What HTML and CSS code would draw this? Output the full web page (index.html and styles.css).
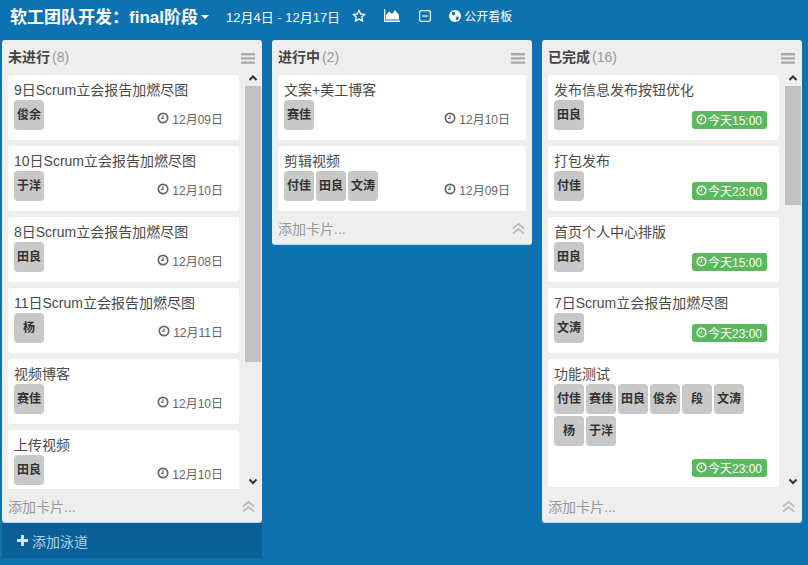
FILE: index.html
```html
<!DOCTYPE html>
<html lang="zh">
<head>
<meta charset="utf-8">
<title>软工团队开发</title>
<link rel="stylesheet" href="styles.css">
</head>
<body>
<svg class="defs" width="0" height="0" aria-hidden="true">
  <symbol id="clock" viewBox="0 0 12 12"><circle cx="6" cy="6" r="4.7" fill="none" stroke="currentColor" stroke-width="1.7"/><path d="M6 3.2V6.3H3.9" fill="none" stroke="currentColor" stroke-width="1.2"/></symbol>
  <symbol id="menu" viewBox="0 0 14 11"><path d="M0 0h14v2.4H0zM0 4.2h14v2.4H0zM0 8.4h14v2.4H0z" fill="currentColor"/></symbol>
  <symbol id="dbl" viewBox="0 0 14 13"><path d="M1 6.5 7 1.5l6 5M1 12l6-5 6 5" fill="none" stroke="currentColor" stroke-width="2"/></symbol>
  <symbol id="up" viewBox="0 0 16 16"><path d="M4.5 10 8 6.5l3.5 3.5" fill="none" stroke="currentColor" stroke-width="2"/></symbol>
  <symbol id="down" viewBox="0 0 16 16"><path d="M4.5 6.5 8 10l3.5-3.5" fill="none" stroke="currentColor" stroke-width="2"/></symbol>
</svg>
<header class="topbar">
  <h1 class="board-title">软工团队开发：final阶段</h1>
  <span class="caret"></span>
  <span class="range">12月4日 - 12月17日</span>
  <svg class="ico star" width="14" height="14" viewBox="0 0 14 14"><path d="M7 1.3 8.7 5l4 .4-3 2.700.9 4L7 10l-3.600 2.100.9-4-3-2.700 4-.4z" fill="none" stroke="currentColor" stroke-width="1.300" stroke-linejoin="round"/></svg>
  <svg class="ico chart" width="16" height="13" viewBox="0 0 16 13"><path d="M0 0h1.200v11.500H16V13H0z M2 10.500V6l3-3.500 3 2.500 3-4 4 5v4.500z" fill="currentColor"/></svg>
  <svg class="ico minus" width="12" height="12" viewBox="0 0 12 12"><rect x=".6" y=".6" width="10.800" height="10.800" rx="1.800" fill="none" stroke="currentColor" stroke-width="1.200"/><path d="M3 6h6" stroke="currentColor" stroke-width="1.200"/></svg>
  <svg class="ico globe" width="12" height="12" viewBox="0 0 12 12"><circle cx="6" cy="6" r="6" fill="currentColor"/><path d="M3 2.500 5.500 1.800 6.500 4 4.800 5.500 3 4.500zM7.500 6.500 10 6.800 9 9.800 7.500 10.500 6.800 8.500z" fill="#0e72b0"/></svg>
  <span class="visibility">公开看板</span>
</header>
<main class="board">
  <section class="column">
    <div class="col-head"><span class="col-name">未进行</span><span class="col-count">(8)</span><svg class="col-menu"><use href="#menu"/></svg></div>
    <div class="list">
      <div class="cards">
        <article class="card"><div class="card-title">9日Scrum立会报告加燃尽图</div><div class="card-meta"><div class="tags"><span class="tag">俊余</span></div><span class="due"><svg class="clock"><use href="#clock"/></svg>12月09日</span></div></article>
        <article class="card"><div class="card-title">10日Scrum立会报告加燃尽图</div><div class="card-meta"><div class="tags"><span class="tag">于洋</span></div><span class="due"><svg class="clock"><use href="#clock"/></svg>12月10日</span></div></article>
        <article class="card"><div class="card-title">8日Scrum立会报告加燃尽图</div><div class="card-meta"><div class="tags"><span class="tag">田良</span></div><span class="due"><svg class="clock"><use href="#clock"/></svg>12月08日</span></div></article>
        <article class="card"><div class="card-title">11日Scrum立会报告加燃尽图</div><div class="card-meta"><div class="tags"><span class="tag">杨</span></div><span class="due"><svg class="clock"><use href="#clock"/></svg>12月11日</span></div></article>
        <article class="card"><div class="card-title">视频博客</div><div class="card-meta"><div class="tags"><span class="tag">赛佳</span></div><span class="due"><svg class="clock"><use href="#clock"/></svg>12月10日</span></div></article>
        <article class="card"><div class="card-title">上传视频</div><div class="card-meta"><div class="tags"><span class="tag">田良</span></div><span class="due"><svg class="clock"><use href="#clock"/></svg>12月10日</span></div></article>
      </div>
      <div class="scrollbar"><svg class="sb-arrow"><use href="#up"/></svg><div class="sb-track"><div class="sb-thumb" style="height:276px"></div></div><svg class="sb-arrow"><use href="#down"/></svg></div>
    </div>
    <div class="col-foot"><span>添加卡片...</span><svg class="foot-ico"><use href="#dbl"/></svg></div>
  </section>

  <section class="column">
    <div class="col-head"><span class="col-name">进行中</span><span class="col-count">(2)</span><svg class="col-menu"><use href="#menu"/></svg></div>
    <div class="list">
      <div class="cards">
        <article class="card"><div class="card-title">文案+美工博客</div><div class="card-meta"><div class="tags"><span class="tag">赛佳</span></div><span class="due"><svg class="clock"><use href="#clock"/></svg>12月10日</span></div></article>
        <article class="card"><div class="card-title">剪辑视频</div><div class="card-meta"><div class="tags"><span class="tag">付佳</span><span class="tag">田良</span><span class="tag">文涛</span></div><span class="due"><svg class="clock"><use href="#clock"/></svg>12月09日</span></div></article>
      </div>
    </div>
    <div class="col-foot"><span>添加卡片...</span><svg class="foot-ico"><use href="#dbl"/></svg></div>
  </section>

  <section class="column">
    <div class="col-head"><span class="col-name">已完成</span><span class="col-count">(16)</span><svg class="col-menu"><use href="#menu"/></svg></div>
    <div class="list">
      <div class="cards">
        <article class="card"><div class="card-title">发布信息发布按钮优化</div><div class="card-meta"><div class="tags"><span class="tag">田良</span></div><span class="due soon"><svg class="clock"><use href="#clock"/></svg>今天15:00</span></div></article>
        <article class="card"><div class="card-title">打包发布</div><div class="card-meta"><div class="tags"><span class="tag">付佳</span></div><span class="due soon"><svg class="clock"><use href="#clock"/></svg>今天23:00</span></div></article>
        <article class="card"><div class="card-title">首页个人中心排版</div><div class="card-meta"><div class="tags"><span class="tag">田良</span></div><span class="due soon"><svg class="clock"><use href="#clock"/></svg>今天15:00</span></div></article>
        <article class="card"><div class="card-title">7日Scrum立会报告加燃尽图</div><div class="card-meta"><div class="tags"><span class="tag">文涛</span></div><span class="due soon"><svg class="clock"><use href="#clock"/></svg>今天23:00</span></div></article>
        <article class="card"><div class="card-title">功能测试</div><div class="card-meta"><div class="tags"><span class="tag">付佳</span><span class="tag">赛佳</span><span class="tag">田良</span><span class="tag">俊余</span><span class="tag">段</span><span class="tag">文涛</span><span class="tag">杨</span><span class="tag">于洋</span></div><span class="due soon"><svg class="clock"><use href="#clock"/></svg>今天23:00</span></div></article>
      </div>
      <div class="scrollbar"><svg class="sb-arrow"><use href="#up"/></svg><div class="sb-track"><div class="sb-thumb" style="height:119px"></div></div><svg class="sb-arrow"><use href="#down"/></svg></div>
    </div>
    <div class="col-foot"><span>添加卡片...</span><svg class="foot-ico"><use href="#dbl"/></svg></div>
  </section>

  <div class="add-lane"><span class="plus"></span>添加泳道</div>
</main>
</body>
</html>
```
FILE: styles.css
```css
* { box-sizing: border-box; }
html, body { margin: 0; height: 100%; }
body {
  background: #0e72b0;
  font-family: "Liberation Sans", "Noto Sans CJK SC", sans-serif;
  color: #4a4a4a;
  overflow: hidden;
}
.defs { display: block; position: absolute; }

.topbar {
  display: flex;
  align-items: center;
  height: 34px;
  padding-left: 10px;
  color: #fff;
}
.board-title { margin: 2px 0 0; font-size: 17px; line-height: 32px; font-weight: 700; }
.caret {
  margin-left: 3px;
  border-left: 4px solid transparent;
  border-right: 4px solid transparent;
  border-top: 4px solid #fff;
}
.range { margin: -2px 0 0 17px; font-size: 13px; }
.ico { flex: none; display: block; color: #fff; }
.star { margin: -3px 0 0 12px; }
.chart { margin: -3px 0 0 18px; }
.minus { margin: -3px 0 0 19px; }
.globe { margin: -3px 0 0 18px; }
.visibility { margin: -4px 0 0 3px; font-size: 12px; }

.board {
  display: grid;
  grid-template-columns: repeat(3, 260px);
  column-gap: 10px;
  align-items: start;
  padding: 6px 0 0 2px;
}
.column {
  background: #eee;
  border-radius: 3px;
  box-shadow: 0 1px 0 #b9dcf2;
  overflow: hidden;
}
.col-head {
  display: flex;
  align-items: flex-start;
  height: 30px;
  padding: 7px 7px 0 6px;
  line-height: 20px;
  font-size: 14px;
}
.col-name { font-weight: 700; color: #444; }
.col-count { margin-left: 2px; color: #999; }
.col-menu { width: 14px; height: 11px; margin: 6px 0 0 auto; color: #aaa; }

.list { display: flex; }
.list:has(.scrollbar) { height: 419px; }
.cards {
  flex: 1;
  min-width: 0;
  display: flex;
  flex-direction: column;
  gap: 6px;
  padding: 5px 6px 0;
  overflow: hidden;
}
.card {
  flex: none;
  background: #fff;
  border-radius: 3px;
  padding: 6px 6px 10px;
}
.card-title { font-size: 14px; line-height: 19px; color: #4a4a4a; white-space: nowrap; }
.card-meta { display: flex; flex-wrap: wrap; align-items: flex-start; row-gap: 2px; }
.tags { display: flex; flex-wrap: wrap; gap: 2px; }
.tag {
  width: 30px;
  height: 30px;
  border-radius: 4px;
  background: #c8c8c8;
  font-size: 12px;
  font-weight: 700;
  line-height: 30px;
  text-align: center;
  color: #333;
  white-space: nowrap;
  overflow: hidden;
}
.due {
  display: flex;
  align-items: center;
  height: 18px;
  margin: 10px 5px 0 auto;
  padding: 0 5px 2px;
  border-radius: 3px;
  font-size: 12px;
  color: #666;
  white-space: nowrap;
}
.clock { width: 12px; height: 12px; margin-right: 3px; flex: none; }
.soon {
  margin: 11px 6px 0 auto;
  padding: 0 5px 2px 4px;
  background: #5cb85c;
  color: #fff;
}
.soon .clock { margin-right: 1px; width: 11px; height: 11px; }

.scrollbar {
  flex: none;
  display: flex;
  flex-direction: column;
  width: 16px;
  margin-right: 1px;
  color: #333;
}
.sb-arrow { flex: none; width: 16px; height: 16px; }
.sb-track { flex: 1; }
.sb-thumb { background: #c1c1c1; }

.col-foot {
  display: flex;
  align-items: center;
  justify-content: space-between;
  height: 33px;
  padding: 1px 7px 0 6px;
  font-size: 14px;
  color: #999;
}
.foot-ico { width: 13px; height: 13px; color: #bbb; }

.add-lane {
  grid-column: 1;
  display: flex;
  align-items: center;
  height: 35px;
  margin-top: 1px;
  padding-left: 15px;
  background: #0c6098;
  font-size: 14px;
  color: #a9d3ee;
}
.plus {
  width: 11px;
  height: 11px;
  margin-right: 4px;
  background:
    linear-gradient(#cfe6f5, #cfe6f5) center / 11px 3px no-repeat,
    linear-gradient(#cfe6f5, #cfe6f5) center / 3px 11px no-repeat;
}
```
